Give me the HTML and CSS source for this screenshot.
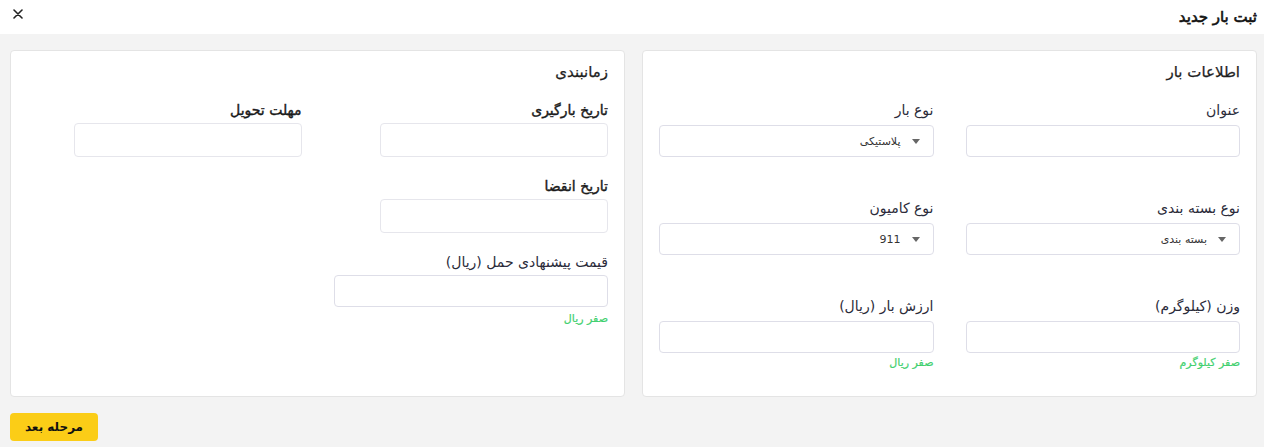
FILE: index.html
```html
<!DOCTYPE html>
<html lang="fa" dir="rtl">
<head>
  <meta charset="UTF-8">
  <title>ثبت بار جدید</title>
  <link rel="stylesheet" href="styles.css">
</head>
<body>

  <div class="topbar">
    <h1>ثبت بار جدید</h1>
    <button class="close-btn" aria-label="بستن">
      <svg width="10" height="10" viewBox="0 0 10 10"><path d="M1 1 L9 9 M9 1 L1 9" stroke="#222" stroke-width="1.6" stroke-linecap="round"/></svg>
    </button>
  </div>

  <div class="page">
    <div class="cards">

      <div class="card">
        <h2>اطلاعات بار</h2>
        <div class="grid">
          <div class="field">
            <label>عنوان</label>
            <input type="text" class="input">
            <div class="hint"></div>
          </div>
          <div class="field">
            <label>نوع بار</label>
            <div class="select"><span class="arrow"></span><span>پلاستیکی</span></div>
            <div class="hint"></div>
          </div>
          <div class="field">
            <label>نوع بسته بندی</label>
            <div class="select"><span class="arrow"></span><span>بسته بندی</span></div>
            <div class="hint"></div>
          </div>
          <div class="field">
            <label>نوع کامیون</label>
            <div class="select"><span class="arrow"></span><span>911</span></div>
            <div class="hint"></div>
          </div>
          <div class="field">
            <label>وزن (کیلوگرم)</label>
            <input type="text" class="input">
            <div class="hint">صفر کیلوگرم</div>
          </div>
          <div class="field">
            <label>ارزش بار (ریال)</label>
            <input type="text" class="input">
            <div class="hint">صفر ریال</div>
          </div>
        </div>
      </div>

      <div class="card">
        <h2>زمانبندی</h2>
        <div class="columns">
          <div class="col">
            <div class="date-field">
              <label class="bold">تاریخ بارگیری</label>
              <input type="text" class="input date">
            </div>
            <div class="date-field">
              <label class="bold">تاریخ انقضا</label>
              <input type="text" class="input date">
            </div>
            <div class="field price">
              <label>قیمت پیشنهادی حمل (ریال)</label>
              <input type="text" class="input">
              <div class="hint">صفر ریال</div>
            </div>
          </div>
          <div class="col">
            <div class="date-field">
              <label class="bold">مهلت تحویل</label>
              <input type="text" class="input date">
            </div>
          </div>
        </div>
      </div>

    </div>

    <button class="next-btn">مرحله بعد</button>
  </div>

</body>
</html>
```

FILE: styles.css
```css
body {
  margin: 0;
  font-family: "DejaVu Sans", sans-serif;
  background-color: #f3f3f3;
  color: #2b2b38;
}
.topbar {
  display: flex;
  justify-content: space-between;
  align-items: center;
  height: 34px;
  padding: 0 7px 0 12px;
  background-color: #fff;
}
.topbar h1 {
  margin: 0;
  font-size: 15px;
  font-weight: normal;
  -webkit-text-stroke: 0.6px #111;
  color: #111;
}
.close-btn {
  border: none;
  background: none;
  padding: 0;
  width: 12px;
  height: 12px;
  margin-top: -6px;
  display: flex;
  align-items: center;
  justify-content: center;
  cursor: pointer;
}
.page {
  padding: 16px 7px 0 10px;
}
.cards {
  display: flex;
  gap: 17px;
}
.card {
  flex: 1;
  background-color: #fff;
  border: 1px solid #e4e4e4;
  border-radius: 4px;
  padding: 11px 16px 23px;
}
.card h2 {
  margin: 0 0 18px 0;
  font-size: 15px;
  line-height: 20px;
  font-weight: normal;
  -webkit-text-stroke: 0.25px #1e1e1e;
  color: #1e1e1e;
}
.grid {
  display: grid;
  grid-template-columns: 1fr 1fr;
  column-gap: 32px;
  row-gap: 21px;
}
.field label, .date-field label {
  display: block;
  font-size: 14px;
  line-height: 20px;
  margin-bottom: 5px;
  color: #2b2b3a;
}
.date-field label, .price label {
  margin-bottom: 3px;
}
label.bold {
  -webkit-text-stroke: 0.4px #1a1a1a;
  color: #1a1a1a;
}
.input {
  display: block;
  box-sizing: border-box;
  width: 100%;
  height: 32px;
  border: 1px solid #dedee8;
  border-radius: 4px;
  background: #fff;
  font-family: inherit;
}
.input.date {
  width: 228px;
  height: 34px;
  border-color: #e6e6ec;
}
.select {
  display: flex;
  align-items: center;
  gap: 11px;
  box-sizing: border-box;
  height: 32px;
  padding: 0 13px;
  border: 1px solid #dedee8;
  border-radius: 4px;
  font-size: 11px;
  color: #333;
}
.arrow {
  width: 0;
  height: 0;
  border-left: 4px solid transparent;
  border-right: 4px solid transparent;
  border-top: 5px solid #666;
}
.hint {
  min-height: 20px;
  line-height: 20px;
  font-size: 11px;
  -webkit-text-stroke: 0.2px #3fd06e;
  color: #3fd06e;
}
.price .hint {
  margin-top: 2px;
}
.columns {
  display: flex;
  gap: 32px;
}
.col {
  flex: 1;
}
.date-field {
  margin-bottom: 19px;
}
.next-btn {
  display: block;
  margin: 16px auto 0 0;
  width: 88px;
  height: 28px;
  border: none;
  border-radius: 4px;
  background-color: #fbcd17;
  font-family: inherit;
  font-size: 12px;
  font-weight: bold;
  color: #111;
  cursor: pointer;
}
```
